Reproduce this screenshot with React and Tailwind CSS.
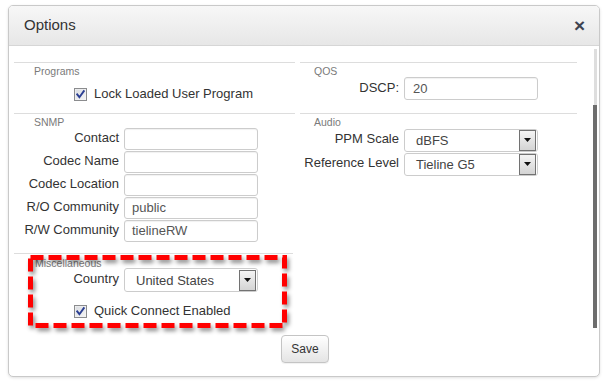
import React from "react";

const FONT = { fontFamily: '"Liberation Sans", Arial, sans-serif' };

function Check() {
  return (
    <svg width="13" height="13" viewBox="0 0 13 13" className="shrink-0">
      <defs>
        <linearGradient id="cbg" x1="0" y1="0" x2="1" y2="1">
          <stop offset="0" stopColor="#d8dbe0" />
          <stop offset="1" stopColor="#f6f6f6" />
        </linearGradient>
      </defs>
      <rect x="0.5" y="0.5" width="12" height="12" fill="url(#cbg)" stroke="#8b8c8e" />
      <rect x="1.5" y="1.5" width="10" height="10" fill="none" stroke="#f3f3f3" strokeWidth="0.6" />
      <path d="M3.2 6.4 L5.4 9.2 L9.8 3.2" stroke="#2b3f93" strokeWidth="1.9" fill="none" strokeLinecap="square" />
    </svg>
  );
}

function TextInput({ value }) {
  return (
    <div className="w-[134px] h-[22px] border border-[#cccccc] rounded-[3px] shadow-[inset_0_1px_1px_rgba(0,0,0,0.06)] bg-white flex items-center pl-[7px] text-[13px] text-[#555]">
      {value}
    </div>
  );
}

function Select({ value, h = "h-[23px]" }) {
  return (
    <div className={`w-[134px] ${h} border border-[#cccccc] rounded-[3px] bg-white flex items-center justify-between pl-[11px] pr-[1px] text-[13px] text-[#444]`}>
      <span className="pt-[2px]">{value}</span>
      <div className="w-[17px] h-[21px] border border-[#727272] bg-gradient-to-b from-[#f4f4f4] to-[#d4d4d4] flex items-center justify-center">
        <svg width="7" height="4" viewBox="0 0 7 4">
          <path d="M0 0 H7 L3.5 4 Z" fill="#111" />
        </svg>
      </div>
    </div>
  );
}

function Title({ children, pl = "pl-[20px]", pt = "pt-[2px]" }) {
  return (
    <div className={`${pl} ${pt} text-[10.5px] leading-[12px] text-[#7a7a7a]`}>{children}</div>
  );
}

function LeftRow({ label, children }) {
  return (
    <div className="flex items-center h-[22px] gap-[5px]">
      <div className="w-[105px] text-right text-[13px] text-[#333] pb-[2px]">{label}</div>
      {children}
    </div>
  );
}

function RightRow({ label, children, h = "h-[22px]" }) {
  return (
    <div className={`flex items-center ${h} gap-[5px]`}>
      <div className="w-[99px] text-right text-[13px] text-[#333] pb-[2px]">{label}</div>
      {children}
    </div>
  );
}

export default function App() {
  return (
    <div className="relative w-[607px] h-[385px] bg-white" style={FONT}>
      <div className="ml-[8px] mt-[5px] w-[592px] border border-[#c9c9c9] rounded-[5px] shadow-[0_1px_3px_rgba(0,0,0,0.12)] bg-white overflow-hidden">
        {/* Header */}
        <div className="h-[40px] bg-gradient-to-b from-[#f7f7f7] to-[#e7e7e7] border-b border-[#d6d6d6] flex items-center justify-between pl-[15px] pr-[14px]">
          <span className="text-[15px] text-[#333]">Options</span>
          <span className="text-[19px] font-bold text-[#3d4350] leading-none pb-[1px]">×</span>
        </div>

        {/* Body */}
        <div className="flex">
          <div className="flex-1 pl-[5px] pt-[16px] pb-[6px]">
            <div className="grid grid-cols-[281px_277px] gap-x-[5px]">
              {/* Programs */}
              <div className="border-t border-[#dddddd] pb-[8px]">
                <Title>Programs</Title>
                <div className="mt-[6px] h-[22px] flex items-center gap-[7px] pl-[60px]">
                  <Check />
                  <span className="text-[13px] text-[#333]">Lock Loaded User Program</span>
                </div>
              </div>
              {/* QOS */}
              <div className="border-t border-[#dddddd]">
                <Title pl="pl-[14px]">QOS</Title>
                <RightRow label="DSCP:" h="h-[23px]">
                  <div className="w-[134px] h-[23px] border border-[#cccccc] rounded-[3px] shadow-[inset_0_1px_1px_rgba(0,0,0,0.06)] flex items-center pl-[8px] text-[13px] text-[#555]">
                    20
                  </div>
                </RightRow>
              </div>

              {/* SNMP */}
              <div className="border-t border-[#dddddd] pb-[11px]">
                <Title>SNMP</Title>
                <div className="flex flex-col gap-[1px]">
                  <LeftRow label="Contact"><TextInput value="" /></LeftRow>
                  <LeftRow label="Codec Name"><TextInput value="" /></LeftRow>
                  <LeftRow label="Codec Location"><TextInput value="" /></LeftRow>
                  <LeftRow label="R/O Community"><TextInput value="public" /></LeftRow>
                  <LeftRow label="R/W Community"><TextInput value="tielineRW" /></LeftRow>
                </div>
              </div>
              {/* Audio */}
              <div className="border-t border-[#dddddd]">
                <Title pl="pl-[14px]">Audio</Title>
                <div className="mt-[1px] flex flex-col gap-[2px]">
                  <RightRow label="PPM Scale"><Select value="dBFS" /></RightRow>
                  <RightRow label="Reference Level"><Select value="Tieline G5" /></RightRow>
                </div>
              </div>

              {/* Miscellaneous */}
              <div className="border-t border-[#dddddd] mr-[2px]">
                <Title pl="pl-[21px]" pt="pt-[3px]">Miscellaneous</Title>
                <div>
                  <LeftRow label="Country"><Select value="United States" h="h-[24px]" /></LeftRow>
                </div>
                <div className="mt-[9px] h-[22px] flex items-center gap-[7px] pl-[60px]">
                  <Check />
                  <span className="text-[13px] text-[#333]">Quick Connect Enabled</span>
                </div>
              </div>
              <div />
            </div>
          </div>
          {/* Scrollbar */}
          <div className="w-[4px] mr-[2px] flex flex-col pt-[3px]">
            <div className="h-[56px] w-[3px] mx-auto bg-[#dedede]" />
            <div className="flex-1 w-[4px] bg-[#6d6d6d]" />
          </div>
        </div>

        {/* Footer */}
        <div className="flex justify-center pl-[2px] pt-[7px] pb-[13px]">
          <button className="h-[28px] w-[48px] border border-[#c4c4c4] rounded-[4px] bg-gradient-to-b from-[#ffffff] to-[#e4e4e4] text-[12px] text-[#333] shadow-[0_1px_1px_rgba(0,0,0,0.06)]">
            Save
          </button>
        </div>
      </div>

      {/* Red dashed annotation */}
      <svg
        className="absolute left-0 top-0 pointer-events-none drop-shadow-[2px_3px_2px_rgba(0,0,0,0.45)]"
        width="607"
        height="385"
      >
        <rect
          x="30.5"
          y="252.5"
          width="254"
          height="68"
          fill="none"
          stroke="#ff0000"
          strokeWidth="5"
          strokeDasharray="13 5"
        />
      </svg>
    </div>
  );
}
